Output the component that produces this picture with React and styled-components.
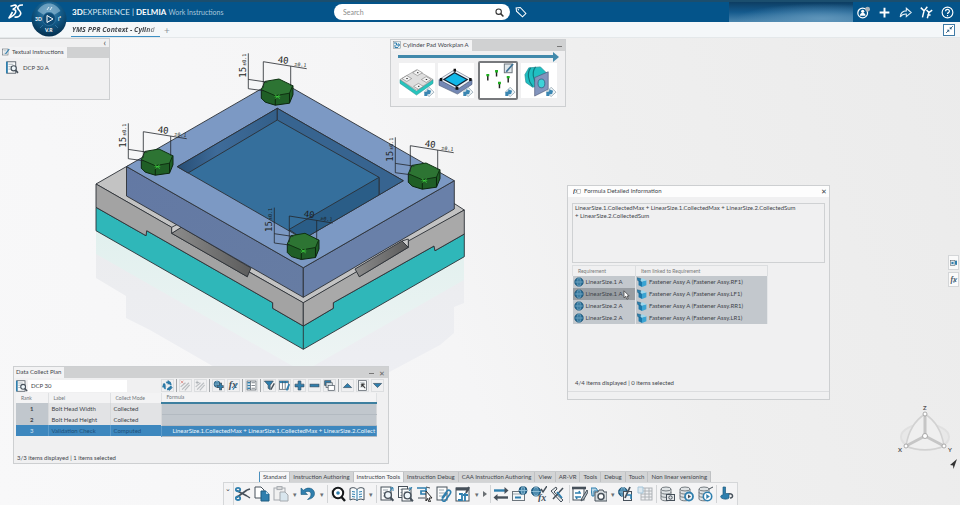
import React, { useState } from "react";
import styled, { createGlobalStyle } from "styled-components";

const INK = "#46505a";
const BLUE = "#2f7fae";
const PALE = "#b9d6e6";

const Globe = ({ x = 8, y = 8, r = 6 }) => (
  <g transform={`translate(${x} ${y})`} fill="none" stroke="#9cc8de" strokeWidth="0.8">
    <circle r={r} fill="#1f658f" stroke="#174a6b" />
    <ellipse rx={r / 2.2} ry={r} />
    <path d={`M${-r} 0H${r}M0 ${-r}V${r}`} />
  </g>
);

const Sheet = ({ x = 2, y = 1, w = 10, h = 13 }) => (
  <g>
    <rect x={x} y={y} width={w} height={h} fill="#fbfcfc" stroke={INK} />
    <path d={`M${x + 2} ${y + 3}h${w - 5}m${5 - w} 3h${w - 4}m${4 - w} 3h${w - 5}`} stroke="#9aa6ae" fill="none" />
  </g>
);

const Lens = ({ x = 9, y = 9, r = 3.4 }) => (
  <g>
    <circle cx={x} cy={y} r={r} fill="#eef6fa" stroke={INK} strokeWidth="1.4" />
    <path d={`M${x + r * 0.7} ${y + r * 0.7}l3 3.4`} stroke={INK} strokeWidth="2" />
  </g>
);

const Fx = ({ x = 1, y = 12, size = 11 }) => (
  <text x={x} y={y} fontFamily="Liberation Serif, serif" fontStyle="italic" fontWeight="bold" fontSize={size} fill={INK}>fx</text>
);

const Database = () => (
  <g fill="#dfe3e5" stroke="#747b80">
    <path d="M2 3v10c0 2.4 10 2.4 10 0V3" />
    <ellipse cx="7" cy="3" rx="5" ry="2" />
    <path d="M2 6.4c0 2.2 10 2.2 10 0M2 9.7c0 2.2 10 2.2 10 0" fill="none" />
  </g>
);

const drawings = {
  cut: <><path d="M1.5 4.5L12 10M1.5 11.5L12 4" stroke={INK} strokeWidth="1.6" /><g fill="none" stroke={BLUE} strokeWidth="1.8"><ellipse cx="3" cy="3.6" rx="2.2" ry="1.8" /><ellipse cx="3" cy="12.2" rx="2.2" ry="1.8" /></g><path d="M12 4l3-1M12 10l3 2" stroke={INK} strokeWidth="1.4" /></>,
  copy: <><path d="M1 1h6l3 3v8H1z" fill="#fff" stroke={INK} /><path d="M7 5h5l3 3v7H7z" fill={BLUE} stroke="#1f5c80" /><path d="M12 5v3h3" fill={PALE} /></>,
  paste: <g opacity="0.45"><rect x="1" y="2" width="11" height="12" fill="#eee" stroke={INK} /><rect x="4" y="0.6" width="5" height="3" fill="#bbb" stroke={INK} /><path d="M7 6h5l3 3v6H7z" fill={PALE} stroke={INK} /></g>,
  undo: <path d="M1 2v6.500h6.500L5 6.300c3-1.800 6-0.800 6 1.700 0 2.500-1.500 4-3.500 5.500 4-0.500 7-2.500 7-6C14.500 2.500 8 0 3.500 4.200z" fill={BLUE} stroke="#1f5c80" strokeWidth="0.6" />,
  find: <><rect x="1" y="4" width="12" height="8" fill="#e3e7e9" /><circle cx="8" cy="7" r="5.2" fill="#fff" stroke="#16191b" strokeWidth="2" /><circle cx="8" cy="7" r="1.8" fill={BLUE} /><path d="M11.5 11l3.5 4" stroke="#16191b" strokeWidth="2.4" /></>,
  book: <><path d="M1 2.500c3-1.500 5-1 7 1C10 1.500 12 1 15 2.500v11.500c-3-1.500-5-1-7 0.500C6 13 4 12.500 1 14z" fill="#f7fafb" stroke={INK} /><path d="M8 3.500v11M3 5.500l3 0.500M3 8l3 0.500M3 10.500l3 0.500M13 5.500l-3 0.500M13 8l-3 0.500M13 10.500l-3 0.500" stroke={BLUE} fill="none" /></>,
  docFind: <><Sheet /><path d="M11 5l3-4m-3 1h3v3" stroke={BLUE} fill="none" /><Lens /></>,
  docsFind: <><Sheet x={0.5} y={0.5} w={9} h={11} /><Sheet x={4} y={3} w={9} h={12} /><path d="M11 5l3-4m-3 1h3" stroke={BLUE} fill="none" /><Lens x={9.5} y={9.5} /></>,
  pickList: <><path d="M0 2h9v3H4v3h7" stroke={BLUE} strokeWidth="1.7" fill="none" /><path d="M1 12h7M9 1l4 1" stroke={INK} /><path d="M9 5l6 7h-3l1.500 3.500-1.500 0.500-1.500-3.500L9 15z" fill="#fff" stroke="#222" /></>,
  attach: <><Sheet x={1} y={1} w={10} h={13} /><path d="M6 12l5-7c2-2 5 0 3 3l-5 7c-2 1-4-1-2-3l4-5" fill="none" stroke={BLUE} strokeWidth="1.6" /></>,
  plan: <><rect x="1" y="2" width="13" height="13" fill="#fff" stroke={INK} /><path d="M1 3h13" stroke={INK} strokeWidth="3" /><path d="M4 8h3v6H3M10 7v8M8 9h5" stroke={BLUE} strokeWidth="1.8" fill="none" /><path d="M14 1l-3 6" stroke={INK} strokeWidth="2" /></>,
  swap: <><path d="M1 4.500h13" stroke={BLUE} strokeWidth="2.400" /><path d="M2 11.500h13" stroke={INK} strokeWidth="2.400" /><path d="M11.500 1l4 3.500-4 3.500zM4.500 8L0.500 11.500l4 3.500z" fill={INK} /></>,
  cardGlobe: <><rect x="0.5" y="5.5" width="12" height="9" fill="#f3f6f7" stroke="#6c757c" /><path d="M1 8h11" stroke="#9aa6ae" /><path d="M3 11.5h6" stroke={BLUE} strokeWidth="2" /><Globe x={11} y={4.5} r={4} /></>,
  globeFx: <><Globe x={5} y={5.5} r={4.6} /><path d="M10 3l2 3 4-6" fill="none" stroke={INK} strokeWidth="1.5" /><Fx x={7} y={15} size={10} /></>,
  bolt: <><path d="M1 5l5-4 1 2-3 3 9 8-2 2z" fill="#e6eaec" stroke={INK} /><path d="M13 2L3 13" stroke={INK} strokeWidth="1.5" /><path d="M7 6l5 6" stroke={BLUE} strokeWidth="1.8" /></>,
  tasks: <><rect x="1" y="2" width="11" height="12" fill="#fff" stroke={INK} /><path d="M0 2h14" stroke={INK} strokeWidth="2.6" /><path d="M3 7h5l-1-2M9 11H4l1 2" stroke={BLUE} strokeWidth="1.6" fill="none" /><path d="M15 4l-5 8-1 3 3-2 4-7z" fill="#aebac2" stroke={INK} /></>,
  camera: <><path d="M0 2h5l2 3H3v5H1z" fill={PALE} stroke={BLUE} /><path d="M4 6h3l1-2h4l1 2h3v9H4z" fill="#d8dde0" stroke={INK} /><circle cx="10" cy="10.5" r="3" fill="#fff" stroke={INK} strokeWidth="1.5" /></>,
  globePlan: <><Globe x={5} y={6} r={4.5} /><rect x="5.5" y="5.5" width="8" height="9" fill="#edf1f3" stroke={INK} /><path d="M12 1L7 12" stroke={INK} strokeWidth="1.8" /><path d="M9 9h4v4" stroke={BLUE} strokeWidth="1.6" fill="none" /></>,
  gridOff: <g opacity="0.4"><rect x="4" y="2" width="11" height="12" fill="#eceff1" stroke={INK} /><path d="M4 5h11M4 8h11M4 11h11M8 2v12M12 2v12" stroke={INK} /><path d="M1 1h5v6H1z" fill={PALE} stroke={BLUE} /></g>,
  dbCam: <><Database /><rect x="7.5" y="8.5" width="8" height="6" fill="#e4e7e9" stroke={INK} /><circle cx="11.5" cy="11.5" r="1.7" fill="none" stroke={INK} /></>,
  dbSync: <><Database /><circle cx="11" cy="10.5" r="4" fill="#eef5f9" stroke={BLUE} strokeWidth="1.8" /><path d="M10 8.500l3 2-3 2z" fill={INK} /></>,
  dbRun: <><Database /><circle cx="10.5" cy="10.5" r="4.2" fill="#fff" stroke={BLUE} strokeWidth="1.6" /><path d="M9.300 8l3.500 2.500-3.500 2.500z" fill={BLUE} /><path d="M12 3l4-2" stroke={INK} /></>,
  hand: <><path d="M4 1h2.500v6.500H10v4.500c-1 1.500-6 1.500-7.500 0C1 11 1.500 9 4 9z" fill={BLUE} stroke="#1f5c80" strokeWidth="0.700" /><path d="M10 8c4-1 5 4 1 4" fill="none" stroke={INK} strokeWidth="1.500" /></>,
  recycle: <><circle cx="8" cy="8.5" r="5" fill="none" stroke={BLUE} strokeWidth="2.8" strokeDasharray="8.400 2.070" /><path d="M8.500 0.500l4.500 3-4.500 3zM15.500 11l-5 4.500-1-5zM0.500 10.500L2 5l4 4z" fill={BLUE} stroke="#1f5c80" strokeWidth="0.4" /></>,
  linkOff: <g opacity="0.55"><path d="M3 14L13 4M7 15l7-8M1 10l7-6" stroke="#8b9298" strokeWidth="1.8" /><path d="M1 1l4 4M5 1L1 5" stroke="#d2493f" strokeWidth="1.3" /></g>,
  linkAdd: <g opacity="0.5"><path d="M3 14L13 4M7 15l7-8M1 10l7-6" stroke="#8b9298" strokeWidth="1.8" /><path d="M3 1v5M1 3.500h5" stroke={INK} /></g>,
  addReq: <><Globe x={6} y={6} r={4.5} /><path d="M11 4v11M5.500 9.500h10" stroke={INK} strokeWidth="4" /><path d="M11 5v9M6.500 9.500h8" stroke={BLUE} strokeWidth="2.4" /></>,
  fxEdit: <><Fx x={1} y={12} size={15} /><path d="M7 14l7-9" stroke={BLUE} strokeWidth="1.5" /></>,
  list: <><rect x="1.5" y="1.5" width="13" height="13" fill="#fff" stroke={INK} /><path d="M2 4h4M2 8h4M2 12h4" stroke={BLUE} strokeWidth="2.4" /><path d="M8 4h5M8 8h5M8 12h5M6.500 1.500v13" stroke={INK} /></>,
  filter: <><path d="M0.500 1.500h13L9 7.500V14l-3-2V7.500z" fill={BLUE} stroke={INK} /><path d="M15 5l-5 9" stroke={INK} strokeWidth="2" /></>,
  columns: <><rect x="0.5" y="1.5" width="13" height="12" fill="#fff" stroke={INK} /><path d="M1 3h12" stroke={BLUE} strokeWidth="3" /><path d="M5 2v11M9 2v11" stroke={INK} /><path d="M15 6l-4 9" stroke={BLUE} strokeWidth="2.6" /></>,
  plus: <path d="M6 1.500h4V6h4.500v4H10v4.500H6V10H1.500V6H6z" fill={BLUE} stroke="#365064" />,
  minus: <rect x="1.5" y="6" width="13" height="4" fill={BLUE} stroke="#365064" />,
  stack: <><rect x="1" y="1" width="9" height="7" fill={BLUE} stroke={INK} /><rect x="3" y="4" width="9" height="7" fill="#d9e2e7" stroke={INK} /><rect x="6" y="8" width="9" height="7" fill="#fff" stroke={INK} /></>,
  up: <path d="M2 11l6-6 6 6z" fill={BLUE} stroke="#365064" />,
  down: <path d="M2 5l6 6 6-6z" fill={BLUE} stroke="#365064" />,
  pageUp: <><Sheet x={2} y={1} w={12} h={14} /><path d="M12 12L7 6m0 4V6h4" fill="none" stroke="#333" strokeWidth="1.5" /></>,
  book3d: <><Sheet x={1} y={1} w={11} h={14} /><path d="M1 1v14" stroke={BLUE} strokeWidth="2.400" /><Lens x={9.5} y={9} r={3.2} /></>,
  note: <><Sheet x={1} y={2} w={11} h={12} /><path d="M14.500 2L7 12" stroke={BLUE} strokeWidth="2.4" /></>,
  flow: <><rect x="1" y="1" width="14" height="14" fill="#e6edf1" stroke="#7b8790" /><path d="M2 4h5v4h6M10 5l3.500 3-3.500 3M4 8v5h6" fill="none" stroke={BLUE} strokeWidth="2" /></>,
  formula: <><Fx x={0} y={12} size={14} /><rect x="8" y="5" width="7" height="8" fill="#fff" stroke="#8c9499" /></>,
  cube: <><path d="M2.500 5l5.500 2v9l-5.500-3z" fill="#1c78aa" /><path d="M8 7l7-2v8l-7 3z" fill="#3ba4d3" /><path d="M2.500 5l6-3L15 5 8 7z" fill="#9cd8ee" /><path d="M0 1l6 1.500-1 5-4-2z" fill="#2a7fae" stroke="#1d536f" strokeWidth="0.6" /></>,
  globe: <Globe r={7} />,
  user: <><circle cx="7" cy="8.5" r="6" fill="none" stroke="#fff" strokeWidth="1.5" /><circle cx="7" cy="6.5" r="2" fill="#fff" /><path d="M3.500 12c0-5 7-5 7 0z" fill="#fff" /><circle cx="13" cy="4" r="3" fill="#a9b3ba" /></>,
  add: <path d="M8 2v12M2 8h12" stroke="#fff" strokeWidth="2.4" />,
  share: <path d="M1.500 13.500C2 8 5 6 9 6V2.800L15 8l-6 5V9.800C6 9.600 3.500 10.500 1.500 13.500z" fill="none" stroke="#e5eff6" strokeWidth="1.3" />,
  people: <path d="M1 2l4 4 4-5M5 6l-2 8M8 5l3 3 4-3M11 8l-2 7M9 11h4" fill="none" stroke="#fff" strokeWidth="1.8" />,
  help: <><circle cx="8" cy="8" r="6.6" fill="none" stroke="#fff" strokeWidth="1.4" /><path d="M5.700 6.500c0-3 4.800-3 4.600 0C10.300 8.300 8 8 8 9.800M8 11v1.500" fill="none" stroke="#fff" strokeWidth="1.5" /></>,
  tag: <><path d="M1.500 2.500L2 7l8 7.500 4.500-4.500L7 2z" fill="none" stroke="#fff" strokeWidth="1.4" /><circle cx="4.5" cy="5" r="0.9" fill="#fff" /></>,
  search: <><circle cx="6.5" cy="6.5" r="4.8" fill="none" stroke="#333" strokeWidth="1.9" /><path d="M10 10l5 5" stroke="#333" strokeWidth="2.6" /></>,
  collapse: <><path d="M14 2l-4 4M2 14l4-4" stroke="#2a5b80" strokeWidth="1.6" /><path d="M8.500 7.500V3l4.500 4.500zM7.500 8.500V13L3 8.500z" fill="#2a5b80" /></>,
  media: <><rect x="1" y="3" width="9" height="10" fill="#d6e3ea" stroke={INK} /><path d="M3 6h4v4H3zM10 4l4-1v9l-4-1z" fill={BLUE} /></>,
};

const Icon = ({ name, size = 16 }) => (
  <Glyph viewBox="0 0 16 16" width={size} height={size} aria-hidden="true">
    {drawings[name]}
  </Glyph>
);

const Bolt = ({ x, y }) => (
  <g transform={`translate(${x} ${y})`}>
    <path d="M-16-7V1.500L-12 5.500-2 8.500 12.200 6.500 15.700-2V-11z" fill="#1f5e26" stroke="#0c260e" />
    <path d="M-16-7L-12.300-15.300 1.700-17.700 15.400-11 12.200-3.500-2-1z" fill="#2d7433" stroke="#0f3212" />
    <path d="M-2-1V8.500M12.200-3.500V6.500" stroke="#0c260e" />
    <path d="M-2.500-2l5 4M2.500-2l-5 4M-3 0h6" stroke="#3fd63f" strokeWidth="0.7" />
    <g stroke="#22262b" strokeWidth="0.8">
      <path d="M-14-9V-35L29.400-28M13.400-11V-30.500" fill="none" />
      <path d="M-29-43.400V-8L-14-6M-29-17.300L-10-14.500" fill="none" />
    </g>
    <g fontFamily="DejaVu Sans Mono, monospace" fill="#1c1f23">
      <text transform="rotate(7)" x="-4" y="-34" fontSize="9">40</text>
      <text transform="rotate(7)" x="13" y="-33" fontSize="5">±0.1</text>
      <text transform="translate(-31 -19) rotate(-90)" fontSize="9">15</text>
      <text transform="translate(-31 -31) rotate(-90)" fontSize="5">±0.1</text>
    </g>
  </g>
);

const Model = () => (
  <ModelSvg viewBox="90 38 400 400" role="img" aria-label="Cylinder pad assembly">
    <defs>
      <linearGradient id="shadeL" x1="0" y1="0" x2="1" y2="1">
        <stop offset="0" stopColor="#6379a4" />
        <stop offset="1" stopColor="#667ca3" />
      </linearGradient>
      <linearGradient id="notch" x1="0" y1="0" x2="1" y2="0">
        <stop offset="0" stopColor="#8b8b8b" />
        <stop offset="1" stopColor="#5c5c5c" />
      </linearGradient>
      <linearGradient id="wall" x1="0" y1="0" x2="1" y2="0">
        <stop offset="0" stopColor="#274e75" />
        <stop offset="0.4" stopColor="#3e6b99" />
        <stop offset="1" stopColor="#335f89" />
      </linearGradient>
      <linearGradient id="mirror" x1="0" y1="0" x2="0" y2="1">
        <stop offset="0" stopColor="#e1f0ee" />
        <stop offset="1" stopColor="#eef4f4" />
      </linearGradient>
      <linearGradient id="mirrorBlue" x1="0" y1="0" x2="0" y2="1">
        <stop offset="0" stopColor="#ebecee" />
        <stop offset="1" stopColor="#eeeff4" />
      </linearGradient>
    </defs>
    <path d="M96 231V278L126 296V318L150 330 303 418 440 345 454 333V307L464 303V257L303 349z" fill="url(#mirrorBlue)" />
    <path d="M96 231V254L303 372 464 280V257L303 349z" fill="url(#mirror)" />
    <g stroke="#2b3036" strokeWidth="0.9" strokeLinejoin="round">
      <path d="M96 207.300L146 235.700 146.700 230.700 272.700 302.700V308.300L303.300 326 333.300 308.300V302.700L434 246 435 250.700 464.300 234V256.700L303.300 349.300 96 230.700z" fill="#2fb7b9" />
      <path d="M303.300 326V349.300" />
      <path d="M96 184L126.500 166.500 278 120 455 204 464.300 210 303.300 303z" fill="#c3c3c3" />
      <path d="M96 184L171.700 227.300V233.300L247.300 276.700V271L303.300 302.700V326L272.700 308.300V302.700L146.700 230.700 146 235.700 96 207.300z" fill="#a3a3a3" />
      <path d="M464.300 210L408.300 241V247.300L359.300 276.700 358.300 270.700 303.300 302.700V326L333.300 308.300V302.700L434 246 435 250.700 464.300 234z" fill="#a9a9a9" />
      <path d="M171.700 233.300L181 227 251 268 247.300 276.700z" fill="url(#notch)" />
      <path d="M171.700 227.300L179 223.500 181 227.500 171.700 233.300z" fill="#cacaca" />
      <path d="M355 269L402 241 408.300 247.300 359.300 276.700z" fill="url(#notch)" />
      <path d="M402 241L408.300 239V247.300z" fill="#cacaca" />
      <path d="M126.500 166.500L303.300 267.700V297.300L126.500 196z" fill="url(#shadeL)" />
      <path d="M454.300 180.700L303.300 267.700V297.300L454.300 209z" fill="#6980a9" />
      <path d="M277.500 79.500L454.300 180.700 303.300 267.700 126.500 166.500z" fill="#7c99c4" />
      <path d="M277.300 108.300L403.300 180.700 303.300 239 177.300 166.700z" fill="#356f9c" />
      <path d="M277.300 108.300L177.300 166.700 188 173 277.300 120z" fill="url(#wall)" />
      <path d="M277.300 108.300L403.300 180.700 379 195V177.300L277.300 120z" fill="#376490" />
      <path d="M379 177.300L289 229.500 303.300 239 379 195z" fill="#2a5d87" />
    </g>
    <Bolt x={277.3} y={96.7} />
    <Bolt x={157.3} y={166.7} />
    <Bolt x={424.3} y={180.7} />
    <Bolt x={303.3} y={251} />
  </ModelSvg>
);

const SyncMark = () => (
  <g>
    <path d="M31 25l5 5-5 4.500-5-4.500z" fill="#eef4f7" stroke="#8196a4" strokeWidth="0.7" />
    <path d="M26 34v-4l3-1v-2l4 1.500-1 3.500-3 0.500v1.500z" fill="#3a86b2" />
  </g>
);

const parts = {
  pad: <>
    <path d="M1 17l17 12 17-12v4L18 33 1 21z" fill="#27c4bd" stroke="#2b8d8c" strokeWidth="0.5" />
    <path d="M1 17L18 7l17 10-17 11z" fill="#dedede" stroke="#777" strokeWidth="0.5" />
    <path d="M14 10l5-3 5 3-5 3zM3 16l5-3 5 3-5 3zM23 17l5-3 5 3-5 3zM15 24l5-3 5 3-5 3z" fill="#f4f4f4" stroke="#666" strokeWidth="0.5" />
    <path d="M18.500 10h1.500M7.500 16H9M27.500 17H29M19.500 24H21" stroke="#222" />
  </>,
  frame: <>
    <path d="M1 17l19 10 15-10v5L20 32 1 23z" fill="#7488b4" stroke="#33435e" strokeWidth="0.5" />
    <path d="M1 17L17 7l18 10-15 10z" fill="#eef2f8" stroke="#33435e" strokeWidth="0.5" />
    <path d="M6 17l11-7 13 7-11 7z" fill="#12b8e8" stroke="#123" strokeWidth="1.3" />
    <path d="M16 7.500h2.500M2 17h2.500M32 17h2.500M18 26h3" stroke="#111" strokeWidth="3" />
  </>,
  bolts: <>
    <path d="M8 12v6M17 8v6M29 14v6M20 20v6" stroke="#222" strokeWidth="1.5" />
    <path d="M6.500 12.500h3M15.500 8.500h3M27.500 14.500h3M18.500 20.500h3" stroke="#1fae1f" strokeWidth="2.5" />
    <rect x="25" y="1" width="8" height="9" fill="#dfe6ea" stroke="#6c757c" />
    <path d="M34 1l-7 8" stroke="#3b7195" strokeWidth="1.8" />
  </>,
  cylinder: <>
    <path d="M4 12l4-7 12-1 6 6-4 12-10 3-7-5z" fill="#20bfc2" stroke="#187f86" strokeWidth="0.6" />
    <path d="M10 5c-4 5-3 13 2 19M15 4c-4 5-3 13 2 19" fill="none" stroke="#11797f" strokeWidth="1.2" />
    <path d="M14 15l14-6v18l-14 7z" fill="#8294bd" stroke="#43506f" strokeWidth="0.6" />
    <ellipse cx="21" cy="21" rx="3.5" ry="4.5" fill="#3dd2d8" stroke="#246" strokeWidth="0.6" />
  </>,
};

const toolbar = [
  "cut", "copy", "paste", "v", "undo", "v", "|", "find", "book", "v", "|",
  "docFind", "docsFind", "pickList", "attach", "plan", "v", ">", "|",
  "swap", "cardGlobe", "globeFx", "bolt", "|", "tasks", "camera", "v",
  "globePlan", "gridOff", "|", "dbCam", "dbSync", "dbRun", "|", "hand",
];

const sections = [
  "Standard", "Instruction Authoring", "Instruction Tools", "Instruction Debug",
  "CAA Instruction Authoring", "View", "AR-VR", "Tools", "Debug", "Touch",
  "Non linear versioning",
];

const planTools = [
  ["recycle"], ["linkOff", "linkAdd"], ["addReq", "fxEdit"], ["list"],
  ["filter", "columns", "plus", "minus", "stack"], ["up", "pageUp", "down"],
];

const planRows = [
  { rank: 1, label: "Bolt Head Width", mode: "Collected", formula: "" },
  { rank: 2, label: "Bolt Head Height", mode: "Collected", formula: "" },
  {
    rank: 3,
    label: "Validation Check",
    mode: "Computed",
    formula: "LinearSize.1.CollectedMax + LinearSize.1.CollectedMax + LinearSize.2.Collect",
  },
];

const requirements = [
  ["LinearSize.1 A", "Fastener Assy A (Fastener Assy.RF1)"],
  ["LinearSize.1 A", "Fastener Assy A (Fastener Assy.LF1)"],
  ["LinearSize.2 A", "Fastener Assy A (Fastener Assy.RR1)"],
  ["LinearSize.2 A", "Fastener Assy A (Fastener Assy.LR1)"],
];

export default function App() {
  const [section, setSection] = useState("Instruction Tools");
  const [selected, setSelected] = useState(3);
  const [step, setStep] = useState("bolts");
  const [planName, setPlanName] = useState("DCP 30");

  return (
    <Page>
      <GlobalStyle />
      <TopBar>
        <Brand>
          <svg width="16" height="16" viewBox="0 0 16 16" aria-label="3DS">
            <path d="M2.500 2.300L7 1c2.500 0.300 1 2.500-2 4.300M4.500 5.500c5.500-0.500 4 5-3.500 8.500L4.500 8M15 1C10.500 0.800 8.500 3 10.500 5.500c2 2 3 3 2 5-1 2-3.500 3-6 2.500" fill="none" stroke="#fff" strokeWidth="1.6" strokeLinejoin="round" />
          </svg>
          <Product><b>3D</b>EXPERIENCE | <b>DELMIA</b> <span>Work Instructions</span></Product>
        </Brand>
        <SearchBox>
          <input type="text" placeholder="Search" aria-label="Search" />
          <IconButton aria-label="Run search"><Icon name="search" size={9} /></IconButton>
        </SearchBox>
        <IconButton $w={22} aria-label="Tags"><Icon name="tag" size={12} /></IconButton>
        <UserName />
        <TopActions>
          {["user", "add", "share", "people", "help"].map((n) => (
            <IconButton key={n} $w={21} aria-label={n}><Icon name={n} size={13} /></IconButton>
          ))}
        </TopActions>
      </TopBar>
      <Compass aria-label="Compass">
        <svg viewBox="0 0 36 36" width="36" height="36">
          <defs>
            <radialGradient id="ball" cx="0.5" cy="0.3" r="0.7">
              <stop offset="0" stopColor="#4f91b8" />
              <stop offset="0.5" stopColor="#125a88" />
              <stop offset="1" stopColor="#05304f" />
            </radialGradient>
          </defs>
          <circle cx="18" cy="18" r="17.5" fill="url(#ball)" />
          <path d="M6.500 10C12 0 24 0 29.500 10L23 14c-2-4-8-4-10 0z" fill="#8db9d2" opacity="0.65" />
          <circle cx="18" cy="18" r="6.5" fill="#0d4a75" stroke="#3777a0" strokeWidth="0.7" />
          <path d="M16 14.500l6 3.500-6 3.500z" fill="none" stroke="#fff" />
          <path d="M9 27l3-3M27 27l-3-3" stroke="#2d6f9b" />
          <path d="M16 9l2-3M19 9l2-3" stroke="#dcebf4" />
          <g fill="#fff" fontFamily="Lato, sans-serif" fontWeight="bold" fontSize="5">
            <text x="4" y="20">3D</text>
            <text x="27" y="20">i²</text>
            <text x="14" y="31">V.R</text>
          </g>
        </svg>
      </Compass>
      <Documents>
        <DocumentTab href="#context">YMS PPR Context - Cylind</DocumentTab>
        <NewTab aria-label="New tab">+</NewTab>
        <Collapse aria-label="Exit full screen"><Icon name="collapse" size={9} /></Collapse>
      </Documents>

      <Viewport>
        <Model />

        <TextualPanel>
          <FoldBar><button aria-label="Fold">‹</button></FoldBar>
          <TitleBar>
            <Title><Icon name="note" size={8} />Textual Instructions</Title>
          </TitleBar>
          <Instruction><Icon name="book3d" size={13} />DCP 30 A</Instruction>
        </TextualPanel>

        <WorkplanPanel>
          <TitleBar>
            <Title><Icon name="flow" size={8} />Cylinder Pad Workplan A</Title>
            <WindowButtons><button aria-label="Minimize"><MinimizeMark /></button></WindowButtons>
          </TitleBar>
          <Timeline />
          <Steps>
            {Object.keys(parts).map((name) => (
              <Step key={name} $active={step === name} onClick={() => setStep(name)} aria-label={name}>
                <svg viewBox="0 0 37 36" width="36" height="35">{parts[name]}<SyncMark /></svg>
              </Step>
            ))}
          </Steps>
        </WorkplanPanel>

        <FormulaPanel>
          <FormulaTitle>
            <Icon name="formula" size={8} />
            <h2>Formula Detailed Information</h2>
            <button aria-label="Close">✕</button>
          </FormulaTitle>
          <FormulaBody>
            <textarea
              readOnly
              aria-label="Formula"
              value={"LinearSize.1.CollectedMax + LinearSize.1.CollectedMax + LinearSize.2.CollectedSum\n+ LinearSize.2.CollectedSum"}
            />
            <RequirementTable>
              <thead>
                <tr><th>Requirement</th><th>Item linked to Requirement</th></tr>
              </thead>
              <tbody>
                {requirements.map(([req, item], i) => (
                  <tr key={item}>
                    <RequirementCell $hover={i === 1}>
                      <Cell><Icon name="globe" size={10} />{req}</Cell>
                      {i === 1 && (
                        <Cursor viewBox="0 0 7 10" width="7" height="10">
                          <path d="M1 0.800v7l1.700-1.500 1.200 2.900 1.300-0.600-1.200-2.600h2.200z" fill="#fff" stroke="#333" strokeWidth="0.7" />
                        </Cursor>
                      )}
                    </RequirementCell>
                    <td><Cell><Icon name="cube" size={10} />{item}</Cell></td>
                  </tr>
                ))}
              </tbody>
            </RequirementTable>
            <Status $bottom={4}>4/4 items displayed | 0 items selected</Status>
          </FormulaBody>
        </FormulaPanel>

        <PlanPanel>
          <TitleBar>
            <Title>Data Collect Plan</Title>
            <WindowButtons>
              <button aria-label="Minimize"><MinimizeMark /></button>
              <button aria-label="Close">✕</button>
            </WindowButtons>
          </TitleBar>
          <PlanTools>
            <Icon name="book3d" size={12} />
            <input value={planName} onChange={(e) => setPlanName(e.target.value)} aria-label="Plan name" />
            {planTools.map((group) => (
              <PlanGroup key={group[0]}>
                {group.map((n) => (
                  <PlanButton key={n} aria-label={n}><Icon name={n} size={11} /></PlanButton>
                ))}
              </PlanGroup>
            ))}
          </PlanTools>
          <PlanTable>
            <colgroup>
              <col width="32" /><col width="62" /><col width="51" /><col />
            </colgroup>
            <thead>
              <tr><th>Rank</th><th>Label</th><th>Collect Mode</th><th>Formula</th></tr>
            </thead>
            <tbody>
              {planRows.map((row) => (
                <PlanRow key={row.rank} $selected={row.rank === selected} onClick={() => setSelected(row.rank)}>
                  <td>{row.rank}</td>
                  <td>{row.label}</td>
                  <td>{row.mode}</td>
                  <td>{row.formula}</td>
                </PlanRow>
              ))}
            </tbody>
          </PlanTable>
          <Status $bottom={1}>3/3 items displayed | 1 items selected</Status>
        </PlanPanel>

        <SideTools>
          <button aria-label="Media"><Icon name="media" size={8} /></button>
          <button aria-label="Formula"><Icon name="fxEdit" size={8} /></button>
        </SideTools>

        <Orientation viewBox="0 0 60 66" width="60" height="66" aria-label="Axis">
          <ellipse cx="28" cy="32" rx="24" ry="13" fill="#e8e8e8" stroke="#e0e0e0" strokeWidth="2" />
          <path d="M28 9C17 16 11 28 9 41c10 5 28 5 38 0C45 28 39 16 28 9z" fill="#efefef" stroke="#d2d2d2" strokeWidth="1.5" />
          <path d="M28 31V9M28 31L9 41M28 31l19 10" stroke="#c6c6c6" strokeWidth="3" />
          <g fill="#fff" stroke="#999" strokeWidth="0.8">
            <circle cx="28" cy="9" r="2" /><circle cx="9" cy="41" r="2" /><circle cx="47" cy="41" r="2" />
            <circle cx="28" cy="31" r="2.500" />
          </g>
          <g fontFamily="Lato, sans-serif" fontSize="6" fontWeight="bold" fill="#555">
            <text x="26" y="5">Z</text><text x="1" y="47">X</text><text x="51" y="47">Y</text>
          </g>
          <path d="M60 54l-7 6 3 0.500 0.500 3.500z" fill="#333" />
        </Orientation>
      </Viewport>

      <ActionBar>
        <Sections>
          {sections.map((name) => (
            <Section
              key={name}
              $light={name === section || name === "Standard"}
              $pinned={name === "Standard"}
              onClick={() => setSection(name)}
            >
              {name}
            </Section>
          ))}
        </Sections>
        <Tools>
          <Handle aria-label="Toolbar options">⌄</Handle>
          {toolbar.map((n, i) => {
            if (n === "|") return <Divider key={i} />;
            if (n === "v") return <Caret key={i} aria-label="More">▾</Caret>;
            if (n === ">") return <Caret key={i} aria-label="Next"><NextMark /></Caret>;
            return <IconButton key={i} $w={19} aria-label={n}><Icon name={n} size={16} /></IconButton>;
          })}
        </Tools>
      </ActionBar>
    </Page>
  );
}

const GlobalStyle = createGlobalStyle`
  * {
    box-sizing: border-box;
  }
  body {
    margin: 0;
    font: 6px/8px Lato, "Noto Sans", sans-serif;
    color: #3e444a;
  }
  button, input, textarea {
    font: inherit;
    color: inherit;
    margin: 0;
    padding: 0;
    border: 0;
    background: none;
    border-radius: 0;
    outline: none;
  }
  table {
    border-collapse: collapse;
    table-layout: fixed;
  }
`;

const Glyph = styled.svg`
  display: block;
  flex: none;
`;

const Page = styled.div`
  position: relative;
  display: flex;
  flex-direction: column;
  min-height: 100vh;
  overflow: hidden;
  background: linear-gradient(70deg, #f8f8f9 0%, #f5f5f6 45%, #efefef 65%, #ebebeb 100%);
`;

const TopBar = styled.header`
  display: flex;
  align-items: center;
  height: 22px;
  border-top: 2px solid #1b4e6e;
  background: #04548a;
  color: #fff;
`;

const Brand = styled.div`
  display: flex;
  align-items: center;
  gap: 48px;
  flex: 0 0 334px;
  padding-left: 8px;
`;

const Product = styled.div`
  font-size: 8px;
  line-height: 12px;
  color: #d6e5ef;
  white-space: nowrap;
  b {
    color: #fff;
  }
  span {
    font-size: 7px;
    color: #a9c8dc;
  }
`;

const SearchBox = styled.div`
  display: flex;
  align-items: center;
  flex: 0 1 176px;
  height: 16px;
  padding: 0 6px 0 9px;
  border-radius: 8px;
  background: #fff;
  input {
    flex: 1;
    min-width: 0;
    font-size: 7px;
    color: #333;
  }
  input::placeholder {
    color: #8b8b8b;
    opacity: 1;
  }
`;

const IconButton = styled.button`
  display: flex;
  align-items: center;
  justify-content: center;
  flex: none;
  width: ${(p) => (p.$w ? `${p.$w}px` : "auto")};
  cursor: pointer;
`;

const UserName = styled.div`
  width: 124px;
  height: 20px;
  margin-left: auto;
  background:
    radial-gradient(ellipse at 75% 85%, #5f95ba 0%, transparent 65%),
    linear-gradient(#0d3d62, #14598c 50%, #4c86ae);
`;

const TopActions = styled.div`
  display: flex;
  padding-right: 2px;
`;

const Compass = styled.button`
  position: absolute;
  left: 31px;
  top: 1px;
  z-index: 2;
  svg {
    display: block;
  }
`;

const Documents = styled.nav`
  display: flex;
  align-items: center;
  height: 16px;
  padding: 0 5px 0 71px;
  border-bottom: 1px solid #e4e8ea;
  background: #f4f7f9;
`;

const DocumentTab = styled.a`
  width: 89px;
  height: 15px;
  overflow: hidden;
  white-space: nowrap;
  border-bottom: 1px solid #3d8fc4;
  padding-left: 1px;
  font: italic bold 7px/15px "Open Sans", sans-serif;
  text-decoration: none;
  color: transparent;
  background: linear-gradient(90deg, #3c4147 85%, #f4f7f9 100%);
  background-clip: text;
`;

const NewTab = styled.button`
  width: 14px;
  font-size: 10px;
  color: #8d959b;
`;

const Collapse = styled.button`
  display: flex;
  align-items: center;
  justify-content: center;
  width: 12px;
  height: 12px;
  margin-left: auto;
  border: 1px solid #3f7ba6;
  background: #fff;
`;

const Viewport = styled.main`
  position: relative;
  flex: 1;
  min-height: 433px;
`;

const ModelSvg = styled.svg`
  position: absolute;
  left: 90px;
  top: 0;
  width: 400px;
  height: 400px;
`;

/* windows floating on the 3D canvas */
const Panel = styled.section`
  position: absolute;
  display: flex;
  flex-direction: column;
  border: 1px solid #cdcfd1;
  background: #f0f0f1;
`;

const TextualPanel = styled(Panel)`
  left: -1px;
  top: 0;
  width: 111px;
  height: 62px;
`;

const WorkplanPanel = styled(Panel)`
  left: 390px;
  top: 1px;
  width: 176px;
  height: 68px;
`;

const FormulaPanel = styled(Panel)`
  right: 130px;
  top: 147px;
  width: 263px;
  height: 215px;
`;

const PlanPanel = styled(Panel)`
  left: 13px;
  bottom: 7px;
  width: 376px;
  height: 98px;
`;

const FoldBar = styled.div`
  display: flex;
  justify-content: flex-end;
  height: 8px;
  padding-right: 3px;
  button {
    font-size: 9px;
    line-height: 6px;
  }
`;

const TitleBar = styled.div`
  display: flex;
  flex: none;
  height: 11px;
  background: #d0d1d2;
`;

const Title = styled.h2`
  display: flex;
  align-items: center;
  gap: 2px;
  margin: 0;
  padding: 0 3px 2px 2px;
  background: #f3f3f4;
  font-size: 6px;
  font-weight: normal;
  white-space: nowrap;
`;

const WindowButtons = styled.div`
  display: flex;
  align-items: center;
  gap: 5px;
  margin-left: auto;
  padding-right: 3px;
  button {
    font-size: 7px;
    line-height: 8px;
    color: #666;
  }
`;

const MinimizeMark = styled.span`
  display: block;
  width: 5px;
  height: 1px;
  margin-top: 2px;
  background: #777;
`;

const Instruction = styled.div`
  display: flex;
  align-items: center;
  gap: 4px;
  padding: 3px 6px;
`;

const Timeline = styled.div`
  position: relative;
  height: 3px;
  margin: 4px 10px 5px 7px;
  background: #4189ab;
  &::after {
    content: "";
    position: absolute;
    right: -4px;
    top: -3px;
    border: solid transparent;
    border-width: 5px 0 5px 6px;
    border-left-color: #4189ab;
  }
`;

const Steps = styled.div`
  display: flex;
  align-items: center;
  justify-content: space-between;
  padding: 0 8px;
  margin-top: -2px;
`;

const Step = styled.button`
  border: ${(p) => (p.$active ? "2px solid #77797c" : "0")};
  border-radius: ${(p) => (p.$active ? "2px" : "0")};
  background: #fff;
  cursor: pointer;
  svg {
    display: block;
  }
`;

const FormulaTitle = styled.div`
  display: flex;
  align-items: center;
  gap: 3px;
  height: 11px;
  padding: 0 2px 1px 5px;
  background: #fdfdfd;
  h2 {
    flex: 1;
    margin: 0;
    font-size: 6px;
    font-weight: normal;
  }
  button {
    font-size: 7px;
  }
`;

const FormulaBody = styled.div`
  display: flex;
  flex-direction: column;
  flex: 1;
  gap: 2px;
  margin-bottom: 7px;
  padding: 6px 4px 0;
  border-bottom: 1px solid #dcdddf;
  textarea {
    display: block;
    height: 60px;
    padding: 0 2px;
    border: 1px solid #cfd1d3;
    resize: none;
  }
`;

const RequirementTable = styled.table`
  width: 196px;
  th, td {
    padding: 0;
    text-align: left;
    border-right: 1px solid #e4e6e8;
  }
  th {
    height: 10px;
    padding-left: 5px;
    border: 1px solid #dcdee0;
    border-bottom: 0;
    font-size: 5px;
    font-weight: normal;
    color: #777;
  }
  th:first-child {
    width: 63px;
  }
  td {
    height: 12px;
    background: #c3c8cd;
  }
`;

const RequirementCell = styled.td`
  position: relative;
  && {
    background: ${(p) => (p.$hover ? "#999ea3" : "#c3c8cd")};
  }
`;

const Cell = styled.div`
  display: flex;
  align-items: center;
  gap: 2px;
  height: 11px;
  padding-left: 1px;
  white-space: nowrap;
`;

const Cursor = styled.svg`
  position: absolute;
  left: 50px;
  top: 2px;
  z-index: 1;
`;

const Status = styled.p`
  margin: auto 0 0;
  padding: 0 3px ${(p) => p.$bottom}px;
`;

const PlanTools = styled.div`
  display: flex;
  align-items: center;
  height: 15px;
  padding: 0 2px;
  input {
    flex: 1;
    min-width: 0;
    max-width: 99px;
    height: 12px;
    margin: 0 auto 0 0;
    padding: 0 3px;
    background: #fff;
  }
`;

const PlanGroup = styled.div`
  display: flex;
  gap: 2px;
  padding: 0 2px;
  & + & {
    border-left: 1px solid #a3a7aa;
  }
`;

const PlanButton = styled.button`
  display: flex;
  align-items: center;
  justify-content: center;
  width: 13px;
  height: 13px;
  border: 1px solid #dcdee0;
  cursor: pointer;
`;

const PlanTable = styled.table`
  width: 361px;
  margin-left: 2px;
  th, td {
    padding: 0 3px;
    height: 11px;
    overflow: hidden;
    text-align: left;
    font-weight: normal;
    white-space: nowrap;
  }
  th {
    height: 10px;
    line-height: 7px;
    font-size: 5px;
    color: #70757a;
    padding-left: 5px;
    border-right: 1px solid #dfe1e3;
    background: #f3f3f4;
  }
  th:last-child {
    border-bottom: 2px solid #3d7f9f;
  }
`;

const PlanRow = styled.tr`
  cursor: pointer;
  td {
    color: ${(p) => (p.$selected ? "#1d4f78" : "inherit")};
    background: ${(p) => (p.$selected ? "#3d87be" : "#e2e3e5")};
    border-right: 1px solid ${(p) => (p.$selected ? "#5c9bca" : "#d6d8da")};
  }
  td:first-child, td:last-child {
    background: ${(p) => (p.$selected ? "#3d87be" : "#c1c7cd")};
  }
  td:first-child {
    text-align: center;
    font-weight: bold;
    color: ${(p) => (p.$selected ? "#b9d6ea" : "inherit")};
  }
  td:last-child {
    padding: 0 0 0 11px;
    color: #eef6fb;
    border-bottom: 1px solid #b3bac1;
  }
`;

const SideTools = styled.div`
  position: absolute;
  right: 1px;
  top: 217px;
  display: flex;
  flex-direction: column;
  gap: 2px;
  button {
    display: flex;
    align-items: center;
    justify-content: center;
    width: 11px;
    height: 15px;
    border: 1px solid #d4d6d8;
    background: #fafafa;
  }
`;

const Orientation = styled.svg`
  position: absolute;
  right: 3px;
  bottom: 0;
`;

const ActionBar = styled.footer`
  display: flex;
  flex-direction: column;
  align-items: center;
`;

const Sections = styled.div`
  display: flex;
  height: 11px;
  margin-left: 10px;
  border-top: 1px solid #c8cacc;
`;

const Section = styled.button`
  padding: 0 3px;
  border-right: 1px solid #bfc1c3;
  background: ${(p) => (p.$light ? "#f6f6f7" : "#d3d4d5")};
  border-left: ${(p) => (p.$pinned ? "1px solid #4a90be" : "0")};
  white-space: nowrap;
  cursor: pointer;
`;

const Tools = styled.div`
  display: flex;
  align-items: center;
  height: 23px;
  border: 1px solid #d5d7d9;
  border-bottom: 0;
  background: #f4f4f5;
`;

const Handle = styled.button`
  width: 10px;
  height: 22px;
  padding-bottom: 12px;
  border-right: 1px solid #d5d7d9;
  font-size: 7px;
`;

const Caret = styled.button`
  display: flex;
  align-items: center;
  justify-content: center;
  width: 8px;
  font-size: 7px;
  color: #6b7074;
`;

const NextMark = styled.span`
  border: solid transparent;
  border-width: 3px 0 3px 4px;
  border-left-color: #6b7074;
`;

const Divider = styled.span`
  width: 1px;
  height: 18px;
  margin: 0 1px;
  background: #d2d4d6;
`;
